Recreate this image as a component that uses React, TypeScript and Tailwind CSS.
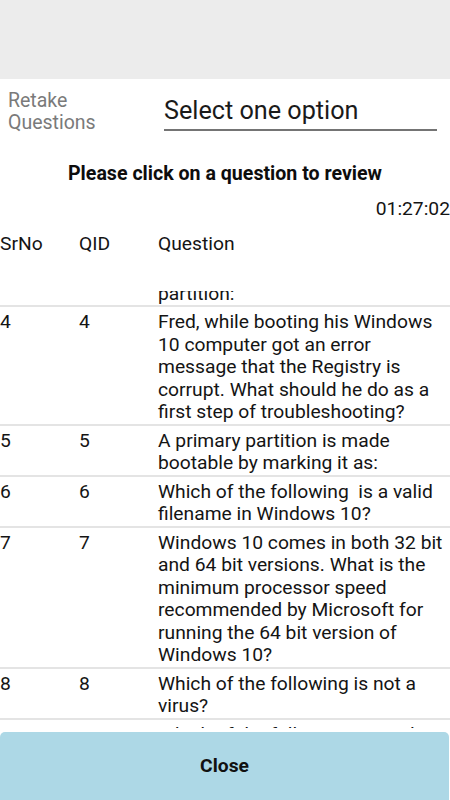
import React from "react";

type Row = { sr: number; qid: number; q: string };

const rows: Row[] = [
  {
    sr: 4,
    qid: 4,
    q: "Fred, while booting his Windows 10 computer got an error message that the Registry is corrupt. What should he do as a first step of troubleshooting?",
  },
  { sr: 5, qid: 5, q: "A primary partition is made bootable by marking it as:" },
  { sr: 6, qid: 6, q: "Which of the following\u00A0 is a valid filename in Windows 10?" },
  {
    sr: 7,
    qid: 7,
    q: "Windows 10 comes in both 32 bit and 64 bit versions. What is the minimum processor speed recommended by Microsoft for running the 64 bit version of Windows 10?",
  },
  { sr: 8, qid: 8, q: "Which of the following is not a virus?" },
  { sr: 9, qid: 9, q: "Which of the following is used to check the disk for errors?" },
];

function TableRow({ r }: { r: Row }) {
  return (
    <div className="flex border-t-2 border-[#e4e4e4] pt-1 text-[19.25px] leading-[22.5px] text-[#141414]">
      <div className="w-[79px] shrink-0">{r.sr}</div>
      <div className="w-[79px] shrink-0">{r.qid}</div>
      <div className="flex-1">{r.q}</div>
    </div>
  );
}

export default function App() {
  return (
    <div
      className="flex h-[800px] w-[450px] flex-col overflow-hidden bg-white"
      style={{ fontFamily: "Roboto, 'Noto Sans', sans-serif" }}
    >
      <div className="h-[79px] shrink-0 bg-[#ececec]" />

      <div className="flex items-start pt-[11px]">
        <div className="w-[164px] shrink-0 pl-2 text-[19.5px] leading-[22px] text-[#7a7a7a]">
          Retake
          <br />
          Questions
        </div>
        <div className="w-[273px] border-b-2 border-[#747474] pt-[5px] pb-[2px] text-[25.2px] leading-[32px] text-[#1a1a1a]">
          Select one option
        </div>
      </div>

      <div className="mt-[28px] text-center text-[19.6px] font-bold leading-[24px] text-[#0d0d0d]">
        Please click on a question to review
      </div>

      <div className="mt-[11px] text-right text-[19.25px] leading-[23px] text-[#141414]">01:27:02</div>

      <div className="mt-[12px] flex text-[19.25px] leading-[23px] text-[#141414]">
        <div className="w-[79px] shrink-0">SrNo</div>
        <div className="w-[79px] shrink-0">QID</div>
        <div className="flex-1">Question</div>
      </div>

      <div className="mt-[36px] mb-[4px] min-h-0 flex-1 overflow-hidden">
        <div className="flex h-[14px] flex-col justify-end overflow-hidden">
          <div className="flex shrink-0 text-[19.25px] leading-[22.5px] text-[#141414]">
            <div className="w-[79px] shrink-0">3</div>
            <div className="w-[79px] shrink-0">3</div>
            <div className="flex-1">
              Which of the following tools is used to format a disk
              <br />
              partition:
            </div>
          </div>
        </div>
        {rows.map((r) => (
          <TableRow key={r.sr} r={r} />
        ))}
      </div>

      <button className="mr-[1px] h-[68px] shrink-0 rounded-t-[5px] bg-[#add8e6] text-[19.25px] font-bold text-[#111]">
        Close
      </button>
    </div>
  );
}
